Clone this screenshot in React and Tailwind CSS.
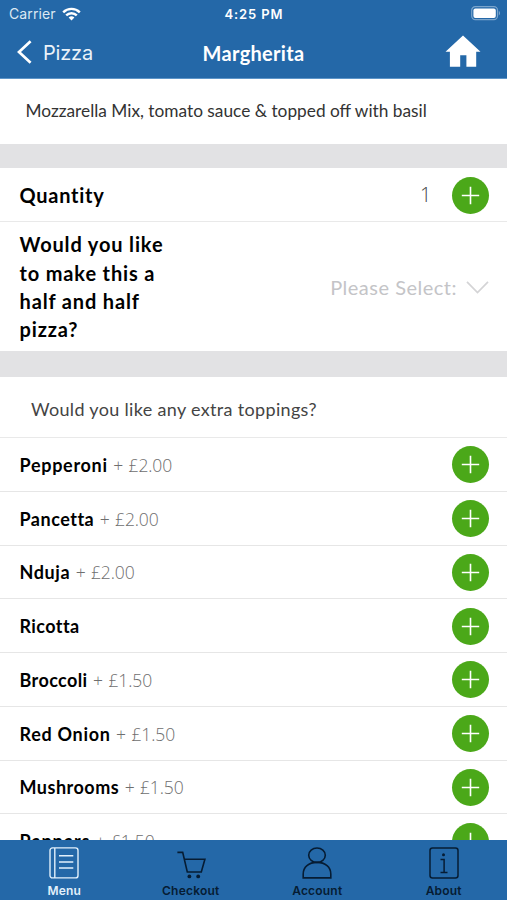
import React from 'react';

const toppings = [
    { name: 'Pepperoni', price: '£2.00', spacing: 'tracking-[0.7px]' },
    { name: 'Pancetta', price: '£2.00', spacing: 'tracking-[0.5px]' },
    { name: 'Nduja', price: '£2.00', spacing: 'tracking-[0.6px]' },
    { name: 'Ricotta', spacing: 'tracking-[0.4px]' },
    { name: 'Broccoli', price: '£1.50', spacing: 'tracking-[0.4px]' },
    { name: 'Red Onion', price: '£1.50', spacing: 'tracking-[0.7px]' },
    { name: 'Mushrooms', price: '£1.50', spacing: 'tracking-[0.5px]' },
    { name: 'Peppers', price: '£1.50', spacing: 'tracking-[0.8px]' },
];

const AddButton = ({ label }) => (
    <button
        aria-label={label}
        className="flex h-[37px] w-[37px] shrink-0 items-center justify-center rounded-full bg-[#4ba819]"
    >
        <svg width="19" height="19" viewBox="0 0 19 19" fill="none" stroke="#fff" strokeWidth="1.6">
            <path d="M9.5 0.8v17.4M0.8 9.5h17.4" />
        </svg>
    </button>
);

const StatusBar = () => (
    <div className="grid h-[27px] grid-cols-3 items-center pl-[9px] pr-[6px] font-['Inter'] text-[13px] leading-none text-white">
        <div className="flex items-center gap-[6px] text-[#dce8f3]">
            <span className="pt-px text-[14px] tracking-[0.1px]">Carrier</span>
            <svg width="19" height="14" viewBox="0 0 19 14" fill="none" stroke="#fff" strokeWidth="2.4">
                <path d="M1.2 5.3a11.8 11.8 0 0 1 16.6 0" />
                <path d="M4.2 8.4a7.5 7.5 0 0 1 10.6 0" />
                <path d="M9.5 13.5 6.6 10.6a4.1 4.1 0 0 1 5.8 0z" fill="#fff" stroke="none" />
            </svg>
        </div>
        <span className="pr-[2px] pt-px text-center font-semibold tracking-[0.9px]">4:25 PM</span>
        <svg className="justify-self-end" width="30" height="15" viewBox="0 0 30 15" fill="none">
            <rect x="0.7" y="0.7" width="25.8" height="13" rx="3.6" stroke="#7ba5cc" strokeWidth="1.2" />
            <rect x="2.4" y="2.4" width="22.4" height="9.6" rx="2" fill="#fff" />
            <path d="M27.8 5v4.4c1.6-.6 1.6-3.8 0-4.4z" fill="#7ba5cc" />
        </svg>
    </div>
);

const Header = () => (
    <header className="h-[79px] shrink-0 border-b border-[#5d95c9] bg-[#2468a8] text-white">
        <StatusBar />
        <div className="grid h-[51px] grid-cols-3 items-center pl-[17px] pr-[26px]">
            <button className="flex items-center gap-[11px] font-['Inter'] text-[20px] tracking-[-0.2px] text-[#eaf2f9]">
                <svg className="mb-px" width="15" height="24" viewBox="0 0 15 24" fill="none" stroke="#fff" strokeWidth="2.7">
                    <path d="M13.6 1.2 2 12l11.6 10.8" />
                </svg>
                <span className="pt-px">Pizza</span>
            </button>
            <h1 className="whitespace-nowrap pl-[9px] text-center text-[20px] font-bold tracking-[0.3px]">Margherita</h1>
            <svg className="mb-[3px] justify-self-end" width="36" height="32" viewBox="0 0 36 32" fill="#fff">
                <path d="M18 0.5 35.5 16.7h-4.3V31.8H21.4V20.2h-6.2v11.6H4.9V16.7H.5z" />
            </svg>
        </div>
    </header>
);

const Topping = ({ name, price, spacing }) => (
    <li className="flex h-[53.75px] shrink-0 items-center justify-between border-b border-[#e6e6e6] pl-[19.5px] pr-[18.5px] pt-px">
        <span className="whitespace-pre text-[18px] leading-6 text-[#6e6e6e]">
            <span className={`font-bold text-black ${spacing}`}>{name}</span>
            {price && (
                <span className="font-['Open_Sans'] text-[17.5px] font-light tracking-[-0.1px] [word-spacing:1px]">
                    {' '}
                    + {price}
                </span>
            )}
        </span>
        <AddButton label={`Add ${name}`} />
    </li>
);

const MenuIcon = () => (
    <svg width="30" height="32" viewBox="0 0 30 32" fill="none" stroke="currentColor" strokeWidth="1.4">
        <rect x="1" y="0.9" width="28" height="30" rx="2.5" />
        <path d="M5.8 1v30M10 8.8h14.3M10 15h14.3M10 21h14.3" />
    </svg>
);

const CartIcon = () => (
    <svg width="30" height="32" viewBox="0 0 30 32" fill="none" stroke="currentColor" strokeWidth="1.6">
        <path d="M1.4 5.4h5.3l4.6 19.6h14L28.9 12.2H8.1" />
        <circle cx="13.4" cy="29.4" r="1.9" fill="currentColor" stroke="none" />
        <circle cx="22.2" cy="29.4" r="1.9" fill="currentColor" stroke="none" />
    </svg>
);

const AccountIcon = () => (
    <svg width="30" height="32" viewBox="0 0 30 32" fill="none" stroke="currentColor" strokeWidth="1.6">
        <ellipse cx="15" cy="8.2" rx="8.3" ry="7.2" />
        <path d="M1.2 30.9V27C1.2 20.2 6.600 15.400 15 15.400S28.800 20.200 28.800 27v3.900z" />
    </svg>
);

const AboutIcon = () => (
    <svg width="30" height="32" viewBox="0 0 30 32" fill="none" stroke="currentColor" strokeWidth="1.5">
        <rect x="1" y="0.9" width="28" height="30" rx="2.5" />
        <path d="M11.5 12.5h3.6v13.1M11.5 25.6h7" />
        <circle cx="14.5" cy="7.8" r="1.5" fill="currentColor" stroke="none" />
    </svg>
);

const tabs = [
    { label: 'Menu', Icon: MenuIcon, color: 'text-[#e2f0fb]' },
    { label: 'Checkout', Icon: CartIcon, color: 'text-[#061c33]' },
    { label: 'Account', Icon: AccountIcon, color: 'text-[#061c33]' },
    { label: 'About', Icon: AboutIcon, color: 'text-[#061c33]' },
];

const TabBar = () => (
    <nav className="grid h-[60px] shrink-0 grid-cols-4 bg-[#2468a8] pl-px">
        {tabs.map(({ label, Icon, color }) => (
            <button key={label} className={`flex flex-col items-center gap-[6px] pt-[7px] ${color}`}>
                <Icon />
                <span className="font-['Inter'] text-[12px] font-semibold leading-[12px] tracking-[0.2px]">{label}</span>
            </button>
        ))}
    </nav>
);

const App = () => (
    <div className="flex h-[900px] w-[507px] flex-col overflow-hidden bg-white font-['Lato',sans-serif] text-black">
        <Header />
        <main className="flex min-h-0 flex-1 flex-col overflow-hidden">
            <p className="flex h-[65px] shrink-0 items-center whitespace-nowrap pb-[2px] pl-[25.5px] text-[17.3px] text-[#333]">
                Mozzarella Mix, tomato sauce &amp; topped off with basil
            </p>
            <div className="h-6 shrink-0 bg-[#e2e2e4]" />
            <section className="flex h-[54px] shrink-0 items-center border-b border-[#e9e9e9] pl-[19.5px] pr-[18.5px] pt-px">
                <h2 className="flex-1 text-[20px] font-bold tracking-[0.75px]">Quantity</h2>
                <span className="mr-[20px] font-['Open_Sans'] text-[20px] font-light text-[#444]">1</span>
                <AddButton label="Increase quantity" />
            </section>
            <section className="flex h-[129px] shrink-0 items-center justify-between pl-[19.5px] pr-[18px]">
                <h2 className="pt-px text-[20px] font-bold leading-[28.3px] tracking-[0.85px]">
                    Would you like<br />to make this a<br />half and half<br />pizza?
                </h2>
                <button className="flex items-center gap-[9px] text-[20px] tracking-[0.5px] text-[#c4c4c7]">
                    Please Select:
                    <svg className="mt-[2px]" width="23" height="13" viewBox="0 0 23 13" fill="none" stroke="#d4d4d6" strokeWidth="1.7">
                        <path d="M1 0.8 11.5 11.5 22 0.8" />
                    </svg>
                </button>
            </section>
            <div className="h-[26px] shrink-0 bg-[#e2e2e4]" />
            <h3 className="flex h-[61px] shrink-0 items-center border-b border-[#e9e9e9] pl-[31px] pt-[5px] text-[18px] tracking-[0.33px] text-[#444]">
                Would you like any extra toppings?
            </h3>
            <ul className="flex flex-col">
                {toppings.map((topping) => (
                    <Topping key={topping.name} {...topping} />
                ))}
            </ul>
        </main>
        <TabBar />
    </div>
);

export default App;
